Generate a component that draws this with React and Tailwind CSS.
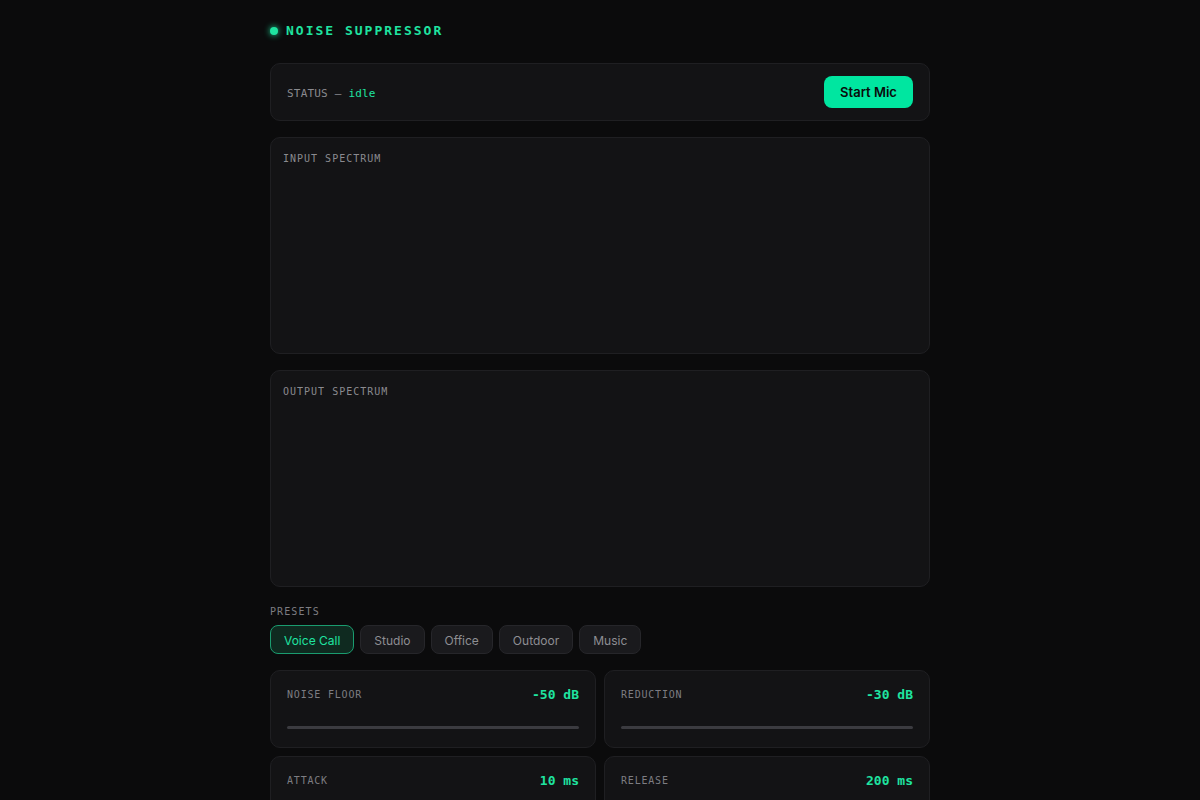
import React from "react";

const mono = { fontFamily: '"DejaVu Sans Mono", "Liberation Mono", monospace' };
const sans = { fontFamily: 'Inter, "Noto Sans", sans-serif' };

function SliderCard({ label, value }) {
  return (
    <div className="rounded-[10px] border border-[#1f1f22] bg-[#131315] px-4 pt-[14px] pb-[18px]">
      <div className="flex h-[20px] items-center justify-between">
        <span className="text-[10px] tracking-[0.8px] text-[#7d7d82]" style={mono}>{label}</span>
        <span className="text-[13px] font-bold text-[#1fe3a0]" style={mono}>{value}</span>
      </div>
      <div className="mt-[21px] h-[3px] rounded-full bg-[#3b3b40]" />
    </div>
  );
}

export default function App() {
  const presets = ["Voice Call", "Studio", "Office", "Outdoor", "Music"];
  return (
    <div className="min-h-[800px] w-full bg-[#0b0b0c]">
      <div className="mx-auto w-[660px] pt-[21px]">
        <div className="flex items-center gap-[8px]">
          <span className="h-[8px] w-[8px] rounded-full bg-[#1fe3a0] shadow-[0_0_6px_#1fe3a0]" />
          <span className="text-[13px] font-bold tracking-[2px] text-[#1fe3a0]" style={mono}>NOISE SUPPRESSOR</span>
        </div>

        <div className="mt-[22px] flex h-[58px] items-center justify-between rounded-[10px] border border-[#1f1f22] bg-[#131315] px-4">
          <span className="pt-[5px] text-[11px] tracking-[0.2px] text-[#8a8a8f]" style={mono}>
            STATUS — <span className="text-[#1fe3a0]">idle</span>
          </span>
          <button className="h-[32px] w-[89px] rounded-[8px] bg-[#00e6a0] pt-[2px] text-[13px] font-semibold text-[#0a0a0a]" style={sans}>
            Start Mic
          </button>
        </div>

        <div className="mt-[16px] h-[217px] rounded-[10px] border border-[#1f1f22] bg-[#131315] px-3 pt-[13px]">
          <div className="text-[10px] tracking-[1px] text-[#8a8a8f]" style={mono}>INPUT SPECTRUM</div>
        </div>

        <div className="mt-[16px] h-[217px] rounded-[10px] border border-[#1f1f22] bg-[#131315] px-3 pt-[13px]">
          <div className="text-[10px] tracking-[1px] text-[#8a8a8f]" style={mono}>OUTPUT SPECTRUM</div>
        </div>

        <div className="mt-[17px] text-[10px] tracking-[1.1px] text-[#7d7d82]" style={mono}>PRESETS</div>
        <div className="mt-[6px] flex gap-[6px]">
          {presets.map((p, i) => (
            <button
              key={p}
              className={
                i === 0
                  ? "h-[29px] rounded-[8px] border border-[#1a9c6f] bg-[#0f2a20] px-[13px] pt-[3px] text-[12px] text-[#1fe3a0]"
                  : "h-[29px] rounded-[8px] border border-[#26262a] bg-[#1a1a1d] px-[13px] pt-[3px] text-[12px] text-[#8e8e93]"
              }
              style={sans}
            >
              {p}
            </button>
          ))}
        </div>

        <div className="mt-[16px] grid grid-cols-2 gap-[8px]">
          <SliderCard label="NOISE FLOOR" value="-50 dB" />
          <SliderCard label="REDUCTION" value="-30 dB" />
          <SliderCard label="ATTACK" value="10 ms" />
          <SliderCard label="RELEASE" value="200 ms" />
        </div>
        <div className="h-[40px]" />
      </div>
    </div>
  );
}
